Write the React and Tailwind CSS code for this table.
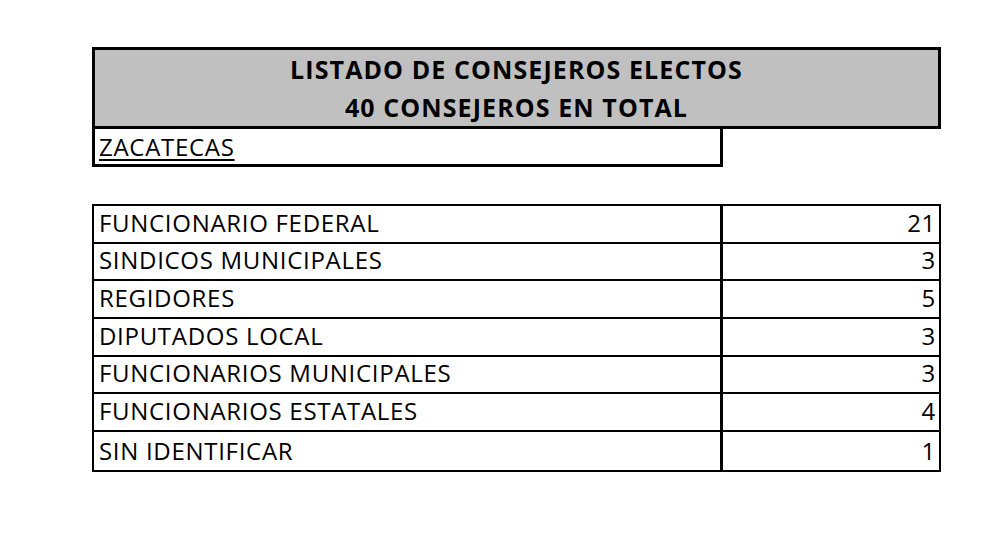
const rows = [
    ['FUNCIONARIO FEDERAL', 21],
    ['SINDICOS MUNICIPALES', 3],
    ['REGIDORES', 5],
    ['DIPUTADOS LOCAL', 3],
    ['FUNCIONARIOS MUNICIPALES', 3],
    ['FUNCIONARIOS ESTATALES', 4],
    ['SIN IDENTIFICAR', 1],
];

export default function App() {
    return (
        <div className="w-[995px] h-[544px] bg-white text-black font-['Open_Sans',sans-serif]">
            <div className="ml-[92px] pt-[47px] w-[849px]">
                <div className="h-[82px] border-[3px] border-black bg-[#c0c0c0] flex flex-col items-center justify-center text-[25px] font-bold leading-[38px] tracking-[1.1px]">
                    <div>LISTADO DE CONSEJEROS ELECTOS</div>
                    <div>40 CONSEJEROS EN TOTAL</div>
                </div>
                <div className="w-[631px] h-[38px] border-x-[3px] border-b-[3px] border-black flex items-end pl-[4px] pb-[5px] text-[24px] tracking-[0.7px] leading-none">
                    <span className="underline underline-offset-[3px] decoration-[2px]">ZACATECAS</span>
                </div>
                <div className="mt-[37px] border-[2px] border-black">
                    {rows.map(([label, n], i) => (
                        <div key={label} className={`flex h-[37.7px] text-[24px] tracking-[0.7px] leading-none ${i < rows.length - 1 ? 'border-b-[2px] border-black' : ''}`}>
                            <div className="w-[629px] border-r-[3px] border-black flex items-end pl-[5px] pb-[7px]">{label}</div>
                            <div className="flex-1 flex items-end justify-end pr-[3px] pb-[7px]">{n}</div>
                        </div>
                    ))}
                </div>
            </div>
        </div>
    );
}
